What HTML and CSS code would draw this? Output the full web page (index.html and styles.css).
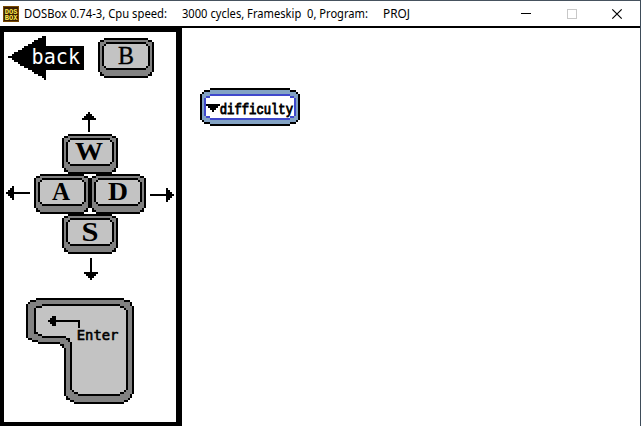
FILE: index.html
```html
<!DOCTYPE html>
<html lang="en">
<head>
<meta charset="utf-8">
<title>DOSBox</title>
<link rel="stylesheet" href="styles.css">
</head>
<body>
<svg class="defs" width="0" height="0">
  <symbol id="keycap" viewBox="0 0 28 20">
    <path d="M3 0H25V1H27V2H28V17H27V19H25V20H3V19H1V17H0V2H1V1H3Z"/>
    <path fill="#828282" d="M3 1H25V2H27V17H26V18H25V19H3V18H2V17H1V2H3Z"/>
    <path d="M4 2H24V3H25V4H26V14H25V15H24V16H4V15H3V14H2V4H3V3H4Z"/>
    <path fill="#c3c3c3" d="M4 3H24V4H25V14H24V15H4V14H3V4H4Z"/>
  </symbol>
</svg>
<div class="window">
  <header class="titlebar">
    <svg class="logo" width="16" height="16" viewBox="0 0 16 16">
      <path fill="#3a1d00" d="M0 0H16V16H0Z"/>
      <path fill="none" stroke="#794900" d="M.5 .5H15.5V15.5H.5Z"/>
      <text class="logo-text" x="1.8" y="7.6" textLength="12.6" lengthAdjust="spacingAndGlyphs">DOS</text>
      <text class="logo-text" x="1.8" y="14.2" textLength="12.6" lengthAdjust="spacingAndGlyphs">BOX</text>
    </svg>
    <svg class="caption" width="400" height="25">
      <text x="0" y="16.5" textLength="143" lengthAdjust="spacingAndGlyphs">DOSBox 0.74-3, Cpu speed:</text>
      <text x="158" y="16.5" textLength="186" lengthAdjust="spacingAndGlyphs" xml:space="preserve">3000 cycles, Frameskip  0, Program:</text>
      <text x="359" y="16.5" textLength="27" lengthAdjust="spacingAndGlyphs">PROJ</text>
    </svg>
    <div class="controls">
      <svg width="10" height="10"><path d="M0 4H10V5H0Z"/></svg>
      <svg width="10" height="10"><path fill="none" stroke="#c8c8c8" d="M.5 .5H9.5V9.5H.5Z"/></svg>
      <svg class="smooth" width="10" height="10"><path fill="none" stroke="#000" stroke-width="1.2" d="M.3 .3L9.7 9.7M9.7 .3L.3 9.7"/></svg>
    </div>
  </header>
  <main class="screen">
    <aside class="sidebar">
      <div class="back-row">
        <svg width="76" height="44" viewBox="0 0 38 22">
          <path d="M19 0V5H38V17H19V22H18V21H17V20H15V19H13V18H12V17H10V16H8V15H6V14H5V13H3V12H2V11H0V10H2V9H3V8H5V7H7V6H8V5H10V4H12V3H13V2H15V1H17V0Z"/>
          <text class="back-text" x="11.8" y="13.8" textLength="24.2" lengthAdjust="spacingAndGlyphs">back</text>
        </svg>
        <svg class="key" width="56" height="40"><use href="#keycap" width="56" height="40"/><text class="thin" x="28" y="26" textLength="16" lengthAdjust="spacingAndGlyphs">B</text></svg>
      </div>
      <div class="pad">
        <svg class="up" width="14" height="20" viewBox="0 0 7 10"><path d="M3 0H4V1H5V2H6V3H7V4H4V10H3V4H0V3H1V2H2V1H3Z"/></svg>
        <svg class="key" width="56" height="40"><use href="#keycap" width="56" height="40"/><text x="27" y="26" textLength="28" lengthAdjust="spacingAndGlyphs">W</text></svg>
        <div class="middle">
          <svg class="side" width="24" height="14" viewBox="0 0 12 7"><path d="M0 3H1V2H2V1H3V0H4V3H12V4H4V7H3V6H2V5H1V4H0Z"/></svg>
          <svg class="key" width="56" height="40"><use href="#keycap" width="56" height="40"/><text x="27" y="26" textLength="18" lengthAdjust="spacingAndGlyphs">A</text></svg>
          <svg class="key" width="56" height="40"><use href="#keycap" width="56" height="40"/><text x="28" y="26" textLength="20" lengthAdjust="spacingAndGlyphs">D</text></svg>
          <svg class="side right" width="24" height="14" viewBox="0 0 12 7"><path d="M12 3H11V2H10V1H9V0H8V3H0V4H8V7H9V6H10V5H11V4H12Z"/></svg>
        </div>
        <svg class="key" width="56" height="40"><use href="#keycap" width="56" height="40"/><text class="tall" x="28" y="27" textLength="17" lengthAdjust="spacingAndGlyphs">S</text></svg>
        <svg class="down" width="14" height="22" viewBox="0 0 7 11"><path d="M3 0H4V7H7V8H6V9H5V10H4V11H3V10H2V9H1V8H0V7H3Z"/></svg>
      </div>
      <svg class="enter" width="108" height="106" viewBox="0 0 54 53">
        <path d="M5 0H49V1H52V2H53V4H54V48H53V50H52V51H51V52H49V53H24V52H22V51H20V49H19V25H18V24H17V23H6V22H3V21H1V20H0V3H1V2H2V1H5Z"/>
        <path fill="#828282" d="M5 1H49V2H52V4H53V48H52V50H51V51H49V52H24V51H22V50H21V49H20V25H19V23H17V22H6V21H3V20H1V3H2V2H5Z"/>
        <path d="M8 3H47V4H49V5H50V6H51V46H50V47H49V48H47V49H26V48H24V47H23V46H22V22H21V21H20V20H8V19H6V18H4V5H5V4H8Z"/>
        <path fill="#c3c3c3" d="M8 4H47V5H49V6H50V46H49V47H47V48H26V47H24V46H23V22H22V20H20V19H8V18H6V17H5V5H8Z"/>
        <path d="M11 11H12V10H13V9H15V11H27V15H26V12H15V14H13V13H12V12H11Z"/>
        <text class="enter-text" x="25.4" y="20.8" textLength="20.8" lengthAdjust="spacingAndGlyphs">Enter</text>
      </svg>
    </aside>
    <section class="content">
      <svg width="100" height="38" viewBox="0 0 50 19">
        <path d="M5 0H45V1H48V2H49V3H50V16H49V17H48V18H45V19H5V18H2V17H1V16H0V3H1V2H2V1H5Z"/>
        <path fill="#83a3c4" d="M5 1H45V2H48V3H49V16H48V17H45V18H5V17H2V16H1V3H2V2H5Z"/>
        <path fill="#3f48cc" d="M5 3H45V4H47V5H48V14H47V15H45V16H5V15H3V14H2V5H3V4H5Z"/>
        <path fill="#fff" d="M5 4H45V5H47V14H45V15H5V14H3V5H5Z"/>
        <path d="M3 8H10V9H9V10H8V11H7V12H6V11H5V10H4V9H3Z"/>
        <text class="menu-text" x="9.9" y="12.8" textLength="36.6" lengthAdjust="spacingAndGlyphs">difficulty</text>
      </svg>
    </section>
  </main>
</div>
</body>
</html>
```
FILE: styles.css
```css
* { box-sizing: border-box; }
body { margin: 0; background: #3e4c59; overflow: hidden; }
svg { display: block; flex: none; overflow: visible; shape-rendering: crispEdges; }
.defs { height: 0; }
.smooth { shape-rendering: auto; }
.window { width: 640px; height: 426px; display: flex; flex-direction: column; background: #fff; border-top: 1px solid #46525e; }
.titlebar { height: 25px; flex: none; display: flex; align-items: center; padding-left: 3px; }
.logo { margin-right: 5px; }
.logo-text { font: bold 7.5px "Liberation Mono", monospace; fill: #ffee50; }
.caption { font: 12px "Noto Sans", sans-serif; }
.controls { display: flex; gap: 35.5px; margin-left: auto; margin-right: 18px; align-items: center; }
.screen { flex: 1; min-height: 0; display: flex; border-top: 2px solid #000; }
.sidebar { width: 182px; flex: none; border: solid #000; border-width: 4px 6px 4px 4px; padding-top: 4px; }
.back-row { display: flex; align-items: flex-start; gap: 14px; padding-left: 4px; }
.back-row .key { margin-top: 2px; }
.back-text { font: 10.5px "DejaVu Sans Mono", monospace; fill: #fff; }
.key text { font: bold 25px "Liberation Serif", serif; text-anchor: middle; }
.key .thin { font-weight: normal; stroke: #000; stroke-width: 0.4px; }
.key .tall { font-size: 27px; }
.pad { display: flex; flex-direction: column; align-items: center; width: 172px; margin-top: 32px; }
.up { margin-bottom: 2px; margin-left: -2px; }
.middle { display: flex; align-items: flex-start; }
.side { margin: 12px 4px 0; }
.side.right { margin-top: 14px; }
.down { margin-top: 4px; margin-left: 2px; }
.enter { margin: 18px 0 0 22px; }
.enter-text { font: 6.8px "DejaVu Sans Mono", monospace; stroke: #000; stroke-width: 0.3px; }
.menu-text { font: 7.2px "Liberation Mono", monospace; stroke: #000; stroke-width: 0.45px; }
.content { flex: 1; padding: 60px 0 0 18px; }
```
